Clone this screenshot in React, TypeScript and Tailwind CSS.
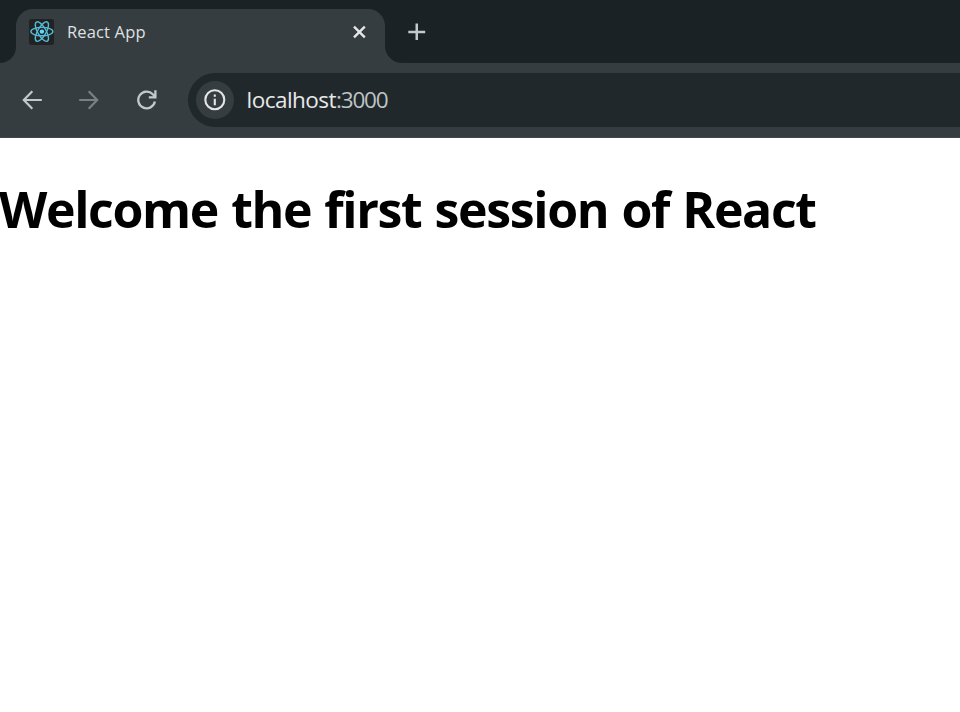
function ReactLogo() {
  return (
    <svg width="25" height="26" viewBox="0 0 25 26" fill="none" className="shrink-0">
      <rect width="25" height="26" rx="2.5" fill="#222222" />
      <g stroke="#53bcd9" strokeWidth="1.4" transform="translate(12.9 12.6)">
        <ellipse rx="11" ry="4.2" />
        <ellipse rx="11" ry="4.2" transform="rotate(60)" />
        <ellipse rx="11" ry="4.2" transform="rotate(120)" />
        <circle r="2.2" fill="#61dafb" stroke="none" />
      </g>
    </svg>
  );
}

function TabStrip() {
  return (
    <div className="flex h-16 bg-[#363d40]">
      <div className="h-[63px] w-4 rounded-br-[17px] bg-[#1b2225]" />
      <div className="h-[63px] w-[369px] bg-[#1b2225] pt-[9px]">
        <div className="flex h-[54px] items-start rounded-t-[17px] bg-[#363d40] pl-[13px] pt-[10px]">
          <ReactLogo />
          <span className="ml-[13px] w-[280px] text-[16.5px] leading-[26px] tracking-[0.15px] text-[#dfe1e2]">React App</span>
          <svg width="26" height="26" viewBox="0 0 26 26" className="shrink-0" fill="none">
            <path d="M7 7.6 17.8 18.4M17.8 7.6 7 18.4" stroke="#e4e6e6" strokeWidth="2.4" />
          </svg>
        </div>
      </div>
      <div className="h-[63px] flex-1 rounded-bl-[17px] bg-[#1b2225] pl-[23px] pt-[23px]">
        <svg width="18" height="18" viewBox="0 0 18 18" fill="none">
          <path d="M.3 9h16.9M8.75 .5v16.6" stroke="#c3c8ca" strokeWidth="2.5" />
        </svg>
      </div>
    </div>
  );
}

function Toolbar() {
  return (
    <div className="flex h-[74px] border-b border-[#42484a] bg-[#363d40] pt-[9px]">
      <div className="flex h-[54px] w-[188px] items-center pl-[22px]">
        <svg width="20" height="20" viewBox="0 0 20 20" fill="none" stroke="#c3c9cb" strokeWidth="2.2">
          <path d="M19.8 10H2M10.3 1.2 1.8 10l8.5 8.8" />
        </svg>
        <svg width="20" height="20" viewBox="0 0 20 20" fill="none" stroke="#7b8081" strokeWidth="2.2" className="ml-[37px]">
          <path d="M.2 10H18M9.7 1.2l8.5 8.8-8.5 8.8" />
        </svg>
        <svg width="20" height="20" viewBox="0 0 20 20" fill="none" stroke="#c3c9cb" strokeWidth="2.3" className="ml-[38px]">
          <path d="M17.9 11.6A8.4 8.4 0 1 1 15.8 4.2L18.2 6.6M18.4 .3v7h-6.6" />
        </svg>
      </div>
      <div className="flex h-[54px] flex-1 items-center rounded-l-full bg-[#20282b] pl-2">
        <div className="flex size-[38px] items-center justify-center rounded-full bg-[#363d40]">
          <svg width="22" height="22" viewBox="0 0 22 22" fill="none" stroke="#e4e6e6" strokeWidth="2.1">
            <circle cx="10.8" cy="10.8" r="9.5" />
            <path d="M10.8 9.7v6.5M10.8 5.5v2.2" />
          </svg>
        </div>
        <span className="ml-[12.5px] text-[22.5px] leading-[30px] tracking-[-0.52px] text-[#e7e9e9]">
          localhost<span className="tracking-[-1.2px] text-[#bfc3c5]">:3000</span>
        </span>
      </div>
    </div>
  );
}

export default function App() {
  return (
    <div className="h-[712px] w-[960px] overflow-hidden bg-white font-['Open_Sans','Noto_Sans',sans-serif]">
      <TabStrip />
      <Toolbar />
      <h1 className="-ml-px mt-[36px] whitespace-nowrap text-[50px] font-bold leading-[70px] tracking-[-1.35px] text-black [word-spacing:1.5px]">
        Welcome the first session of React
      </h1>
    </div>
  );
}
